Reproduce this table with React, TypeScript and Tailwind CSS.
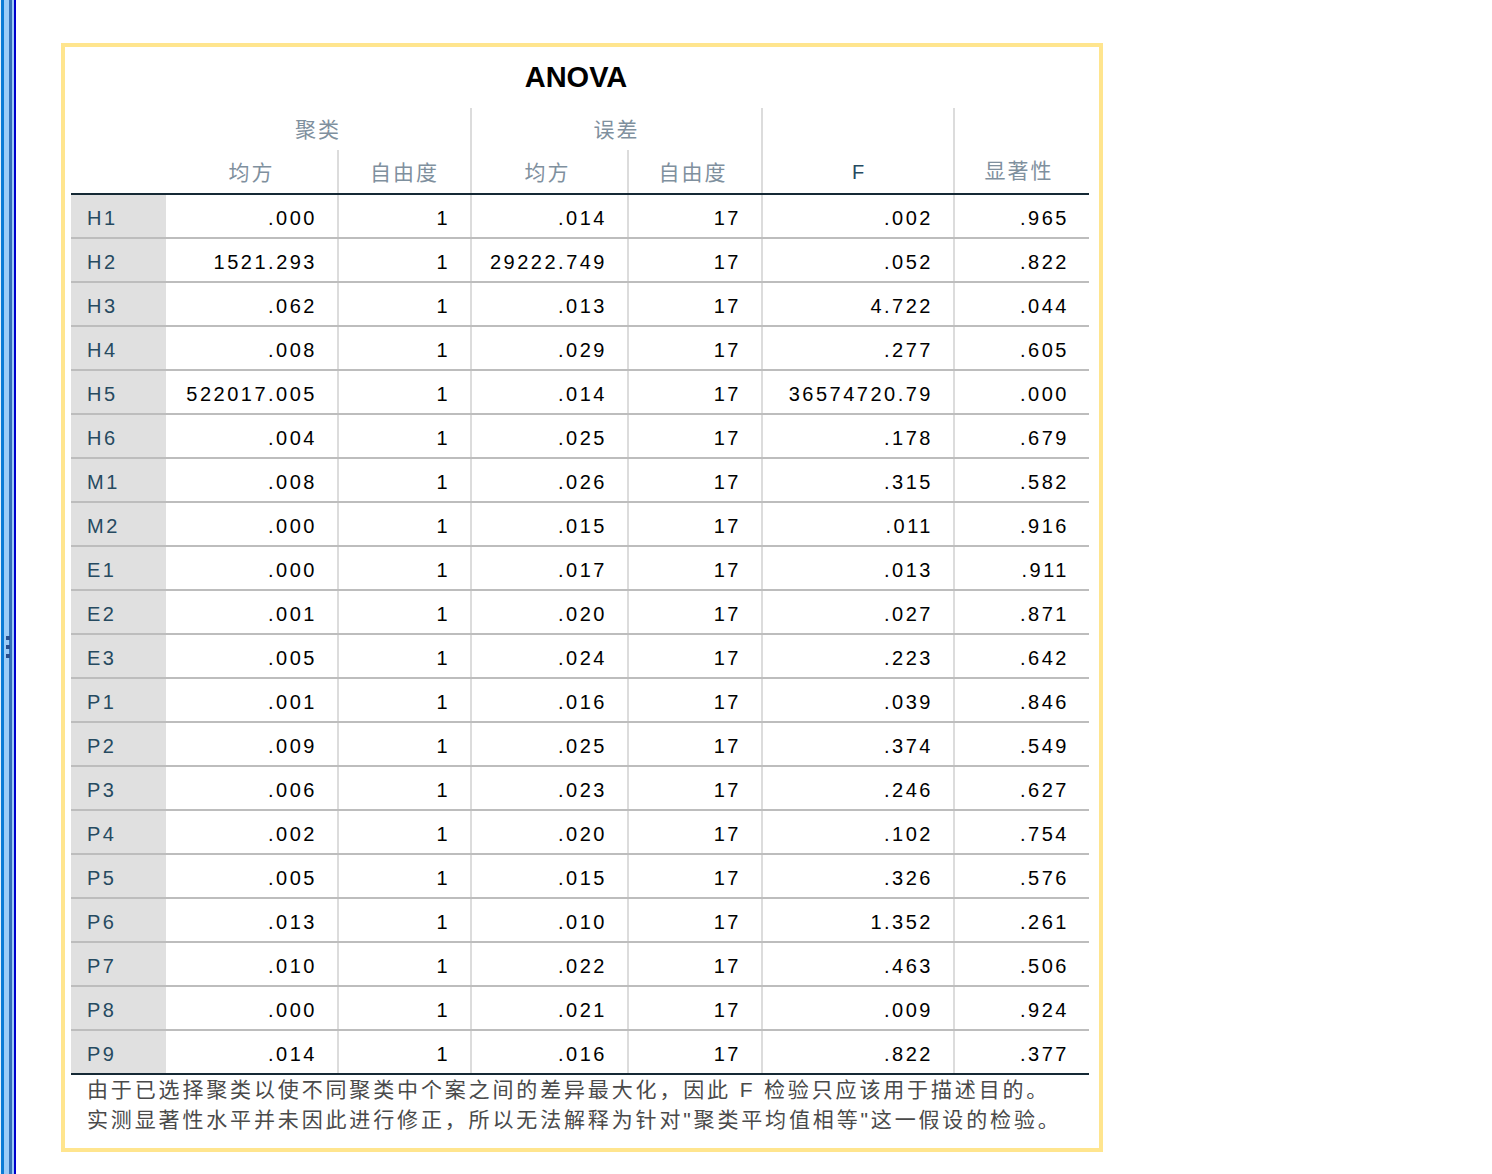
import React from 'react';

const rows: string[][] = [
  ['H1', '.000', '1', '.014', '17', '.002', '.965'],
  ['H2', '1521.293', '1', '29222.749', '17', '.052', '.822'],
  ['H3', '.062', '1', '.013', '17', '4.722', '.044'],
  ['H4', '.008', '1', '.029', '17', '.277', '.605'],
  ['H5', '522017.005', '1', '.014', '17', '36574720.79', '.000'],
  ['H6', '.004', '1', '.025', '17', '.178', '.679'],
  ['M1', '.008', '1', '.026', '17', '.315', '.582'],
  ['M2', '.000', '1', '.015', '17', '.011', '.916'],
  ['E1', '.000', '1', '.017', '17', '.013', '.911'],
  ['E2', '.001', '1', '.020', '17', '.027', '.871'],
  ['E3', '.005', '1', '.024', '17', '.223', '.642'],
  ['P1', '.001', '1', '.016', '17', '.039', '.846'],
  ['P2', '.009', '1', '.025', '17', '.374', '.549'],
  ['P3', '.006', '1', '.023', '17', '.246', '.627'],
  ['P4', '.002', '1', '.020', '17', '.102', '.754'],
  ['P5', '.005', '1', '.015', '17', '.326', '.576'],
  ['P6', '.013', '1', '.010', '17', '1.352', '.261'],
  ['P7', '.010', '1', '.022', '17', '.463', '.506'],
  ['P8', '.000', '1', '.021', '17', '.009', '.924'],
  ['P9', '.014', '1', '.016', '17', '.822', '.377'],
];

const cols = 'grid grid-cols-[95px_173px_133px_157px_134px_192px_134px]';
const head = "flex justify-center text-[21px] tracking-[2px] text-[#7f909e] font-['Noto_Sans_CJK_SC',sans-serif]";

const WindowEdge: React.FC = () => (
  <div className="relative flex h-[1174px] w-[16px] shrink-0">
    <div className="w-[1px] bg-[#e4effa]" />
    <div className="w-[3px] bg-[#0a7ad6]" />
    <div className="w-[5px] bg-[#9ccbf7]" />
    <div className="w-[3px] bg-[#3370b8]" />
    <div className="w-[2px] bg-[#9ccbf7]" />
    <div className="w-[2px] bg-[#0000cc]" />
    {/* grip dots */}
    <div className="absolute left-[6px] top-[636px] flex flex-col gap-[5px]">
      <div className="h-[4px] w-[4px] bg-[#2a4f8f]" />
      <div className="h-[4px] w-[4px] bg-[#2a4f8f]" />
      <div className="h-[4px] w-[4px] bg-[#2a4f8f]" />
    </div>
  </div>
);

export default function App() {
  return (
    <div className="flex min-h-[1174px] w-full bg-white">
      <WindowEdge />

      <div className="ml-[45px] mt-[43px]">
        <div className="w-[1042px] border-4 border-[#ffe58e] bg-white pl-[6px] pr-[10px]">
          {/* title */}
          <div className="flex h-[61px] items-center justify-center pr-[8px] text-[29px] font-bold text-black font-['Liberation_Sans',Arial,sans-serif]">
            ANOVA
          </div>

          {/* header */}
          <div className={`${cols} grid-rows-[42px_43px]`}>
            <div className="row-span-2" />
            <div className={`${head} col-span-2 items-center border-r-2 border-[#dcdcdc]`}>聚类</div>
            <div className={`${head} col-span-2 items-center border-r-2 border-[#dcdcdc]`}>误差</div>
            <div className="row-span-2 flex items-end justify-center border-r-2 border-[#dcdcdc] pb-[6px] text-[20px] text-[#264a60] font-['Liberation_Sans',Arial,sans-serif]">
              F
            </div>
            <div className={`${head} row-span-2 items-end pb-[8px] pr-[6px]`}>显著性</div>
            <div className={`${head} items-center border-r-2 border-[#dcdcdc]`}>均方</div>
            <div className={`${head} items-center border-r-2 border-[#dcdcdc]`}>自由度</div>
            <div className={`${head} items-center border-r-2 border-[#dcdcdc] pr-[4px]`}>均方</div>
            <div className={`${head} items-center border-r-2 border-[#dcdcdc] pr-[4px]`}>自由度</div>
          </div>

          {/* body */}
          <div className="border-t-2 border-[#152935] font-['Liberation_Sans',Arial,sans-serif] text-[20px] tracking-[2.5px]">
            {rows.map((r, i) => (
              <div
                key={r[0]}
                className={`${cols} h-[44px] border-b-2 ${i === rows.length - 1 ? 'border-[#152935]' : 'border-[#bdbdbd]'}`}
              >
                <div className="flex items-center bg-[#e0e0e0] pl-[16px] pt-1 text-[#264a60]">{r[0]}</div>
                {r.slice(1).map((v, j) => (
                  <div
                    key={j}
                    className={`flex items-center justify-end pr-5 pt-1 text-black ${j < 5 ? 'border-r-2 border-[#dcdcdc]' : ''}`}
                  >
                    {v}
                  </div>
                ))}
              </div>
            ))}
          </div>

          {/* footnote */}
          <div className="pb-[13px] pl-[16px] text-[21px] leading-[30px] tracking-[2.85px] text-[#4a4a4a] font-['Liberation_Sans','Noto_Sans_CJK_SC',sans-serif]">
            <p>由于已选择聚类以使不同聚类中个案之间的差异最大化，因此 F 检验只应该用于描述目的。</p>
            <p>实测显著性水平并未因此进行修正，所以无法解释为针对"聚类平均值相等"这一假设的检验。</p>
          </div>
        </div>
      </div>
    </div>
  );
}
